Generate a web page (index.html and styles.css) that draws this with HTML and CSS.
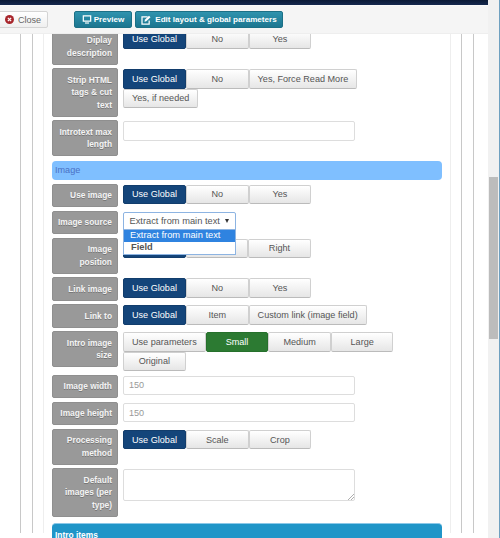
FILE: index.html
```html
<!DOCTYPE html>
<html lang="en">
<head>
  <meta charset="UTF-8">
  <title>Edit layout</title>
  <link rel="stylesheet" href="styles.css">
</head>
<body>

<div class="window">
  <div class="frame">
    <div class="topbar"></div>

    <div class="toolbar">
      <button class="tool-btn close-btn">
        <svg class="icon" viewBox="0 0 12 12" width="9" height="9">
          <circle cx="6" cy="6" r="6" fill="#a8262c"/>
          <path d="M3.8 3.8l4.4 4.4M8.2 3.8l-4.4 4.4" stroke="#fff" stroke-width="1.7"/>
        </svg>
        Close
      </button>
      <button class="tool-btn teal-btn preview-btn">
        <svg class="icon" viewBox="0 0 12 11" width="10" height="9">
          <path d="M1.5 1h9v6.5h-9z" fill="none" stroke="#fff" stroke-width="1.5"/>
          <path d="M3.5 9.8h5" stroke="#fff" stroke-width="1.4"/>
        </svg>
        Preview
      </button>
      <button class="tool-btn teal-btn edit-btn">
        <svg class="icon" viewBox="0 0 12 12" width="10" height="10">
          <path d="M8 2.2H1.2v8.6h8.6V6.5" fill="none" stroke="#fff" stroke-width="1.5"/>
          <path d="M4.2 8l.4-2.2L9.6.8l1.8 1.8-5 5z" fill="#fff"/>
        </svg>
        Edit layout &amp; global parameters
      </button>
    </div>

    <div class="main">
      <div class="box-outer">
        <div class="box-middle">
          <div class="box-inner">
            <div class="form">

              <div class="row">
                <div class="label">Diplay description</div>
                <div class="control">
                  <div class="btn-group">
                    <span class="opt active">Use Global</span>
                    <span class="opt">No</span>
                    <span class="opt">Yes</span>
                  </div>
                </div>
              </div>

              <div class="row">
                <div class="label">Strip HTML tags &amp; cut text</div>
                <div class="control">
                  <div class="btn-group">
                    <span class="opt active">Use Global</span>
                    <span class="opt">No</span>
                    <span class="opt">Yes, Force Read More</span>
                    <span class="opt">Yes, if needed</span>
                  </div>
                </div>
              </div>

              <div class="row">
                <div class="label">Introtext max length</div>
                <div class="control">
                  <div class="field"></div>
                </div>
              </div>

              <div class="section section-light">Image</div>

              <div class="row">
                <div class="label">Use image</div>
                <div class="control">
                  <div class="btn-group">
                    <span class="opt active">Use Global</span>
                    <span class="opt">No</span>
                    <span class="opt">Yes</span>
                  </div>
                </div>
              </div>

              <div class="row">
                <div class="label">Image source</div>
                <div class="control">
                  <div class="select">
                    <span>Extract from main text</span>
                    <span class="arrow"></span>
                    <ul class="select-menu">
                      <li class="selected">Extract from main text</li>
                      <li>Field</li>
                    </ul>
                  </div>
                </div>
              </div>

              <div class="row">
                <div class="label">Image position</div>
                <div class="control">
                  <div class="btn-group">
                    <!-- these two sit under the open select menu -->
                    <span class="opt active"></span>
                    <span class="opt"></span>
                    <span class="opt">Right</span>
                  </div>
                </div>
              </div>

              <div class="row">
                <div class="label">Link image</div>
                <div class="control">
                  <div class="btn-group">
                    <span class="opt active">Use Global</span>
                    <span class="opt">No</span>
                    <span class="opt">Yes</span>
                  </div>
                </div>
              </div>

              <div class="row">
                <div class="label">Link to</div>
                <div class="control">
                  <div class="btn-group">
                    <span class="opt active">Use Global</span>
                    <span class="opt">Item</span>
                    <span class="opt">Custom link (image field)</span>
                  </div>
                </div>
              </div>

              <div class="row">
                <div class="label">Intro image size</div>
                <div class="control">
                  <div class="btn-group">
                    <span class="opt">Use parameters</span>
                    <span class="opt green">Small</span>
                    <span class="opt">Medium</span>
                    <span class="opt">Large</span>
                    <span class="opt">Original</span>
                  </div>
                </div>
              </div>

              <div class="row">
                <div class="label">Image width</div>
                <div class="control">
                  <div class="field placeholder">150</div>
                </div>
              </div>

              <div class="row">
                <div class="label">Image height</div>
                <div class="control">
                  <div class="field placeholder">150</div>
                </div>
              </div>

              <div class="row">
                <div class="label">Processing method</div>
                <div class="control">
                  <div class="btn-group">
                    <span class="opt active">Use Global</span>
                    <span class="opt">Scale</span>
                    <span class="opt">Crop</span>
                  </div>
                </div>
              </div>

              <div class="row">
                <div class="label">Default images (per type)</div>
                <div class="control">
                  <div class="field textarea">
                    <svg class="grip" viewBox="0 0 6 6" width="6" height="6">
                      <path d="M0 6l6-6M3 6l3-3" stroke="#999" stroke-width="0.8"/>
                    </svg>
                  </div>
                </div>
              </div>

              <div class="section section-dark">Intro items</div>

            </div>
          </div>
        </div>
      </div>
    </div>
  </div>

  <div class="scrollbar">
    <div class="thumb"></div>
  </div>
</div>

</body>
</html>
```

FILE: styles.css
```css
* {
  box-sizing: border-box;
}

body {
  margin: 0;
  background: #fff;
  font-family: "Liberation Sans", Arial, sans-serif;
  font-size: 9.1px;
  color: #555;
  overflow: hidden;
}

.window {
  display: flex;
  width: 500px;
  height: 538px;
  overflow: hidden;
}

.frame {
  width: 488px;
  height: 538px;
  display: flex;
  flex-direction: column;
}

.topbar {
  height: 5px;
  flex: none;
  background: linear-gradient(#0b1a36, #16294f);
}

.toolbar {
  height: 29px;
  flex: none;
  display: flex;
  align-items: flex-start;
  padding-top: 5px;
  background: #f5f5f5;
  border-top: 1px solid #fafafa;
  border-bottom: 1px solid #eee;
  position: relative;
  z-index: 2;
}

.tool-btn {
  height: 17px;
  display: flex;
  align-items: center;
  justify-content: center;
  gap: 4px;
  padding: 0;
  border-radius: 2px;
  font-family: inherit;
  font-size: 9.1px;
  white-space: nowrap;
}

.close-btn {
  width: 50px;
  margin-left: -2px;
  margin-right: 26px;
  background: linear-gradient(#fff, #efefef);
  border: 1px solid #d4d4d4;
  color: #666;
}

.teal-btn {
  background: linear-gradient(#2f93ae, #1c7690);
  border: 1px solid #1c7086;
  color: #fff;
  font-size: 8.1px;
  font-weight: bold;
}

.preview-btn {
  width: 58px;
  margin-right: 3px;
  gap: 2px;
}

.edit-btn {
  width: 148px;
}

.main {
  flex: 1;
  min-height: 0;
  overflow: hidden;
  padding: 0 14px 0 20px;
}

.box-outer {
  height: 100%;
  border-left: 1px solid #c8c8c8;
  border-right: 1px solid #c8c8c8;
  padding: 0 11px;
}

.box-middle {
  height: 100%;
  border-left: 1px solid #c8c8c8;
  border-right: 1px solid #c8c8c8;
  padding: 0 10px;
}

.box-inner {
  height: 100%;
  border-left: 1px solid #eee;
  border-right: 1px solid #eee;
  padding: 0 8px;
}

.form {
  margin-top: -5.4px;
}

.row {
  display: flex;
  align-items: flex-start;
  margin-bottom: 3.5px;
}

.label {
  width: 66px;
  flex: none;
  padding: 4.6px 5px 4.6px 4px;
  background: #999;
  border-radius: 2px;
  border: 1px solid #8f8f8f;
  color: #f4f4f4;
  font-size: 8.4px;
  font-weight: bold;
  line-height: 12.4px;
  text-align: right;
  text-shadow: 0 1px 0 #777;
}

.control {
  flex: 1;
  padding: 1px 0 0 5px;
}

.btn-group {
  display: flex;
  flex-wrap: wrap;
  max-width: 275px;
}

.opt {
  min-width: 62.6px;
  height: 19.4px;
  padding: 0 8px;
  display: flex;
  align-items: center;
  justify-content: center;
  background: linear-gradient(#fff, #e6e6e6);
  border: 1px solid #d0d0d0;
  border-bottom-color: #bbb;
  border-radius: 2px;
  color: #555;
}

.opt.active {
  background: #14457a;
  border-color: #123d6c;
  color: #fff;
}

.opt.green {
  background: #2c7a32;
  border-color: #26702c;
  color: #fff;
}

.field {
  width: 232px;
  height: 19.6px;
  padding: 0 5px;
  display: flex;
  align-items: center;
  background: #fff;
  border: 1px solid #ddd;
  border-radius: 2px;
}

.placeholder {
  color: #999;
}

.textarea {
  height: 32px;
  position: relative;
}

.grip {
  position: absolute;
  right: 0;
  bottom: 0;
}

.section {
  height: 19px;
  margin: 5px 0 3.5px;
  padding: 4px 3px;
  border-radius: 4px;
  line-height: 11px;
}

.section-light {
  background: #7fbfff;
  color: #4a70c4;
}

.section-dark {
  height: 30px;
  margin-top: 6.3px;
  background: #2095c8;
  border-top: 1px solid #8cc8e8;
  color: #fff;
  font-size: 8.4px;
  font-weight: bold;
  line-height: 14px;
}

.select {
  width: 113px;
  height: 19.5px;
  padding: 0 5.5px;
  display: flex;
  align-items: center;
  justify-content: space-between;
  position: relative;
  background: #fff;
  border: 1px solid #8db4e2;
  border-radius: 2px;
  font-size: 9.3px;
}

.arrow {
  margin-right: 1px;
  border-left: 2.5px solid transparent;
  border-right: 2.5px solid transparent;
  border-top: 4px solid #333;
}

.select-menu {
  position: absolute;
  top: 16.5px;
  left: -1px;
  width: 113px;
  margin: 0;
  padding: 0 0 1px;
  list-style: none;
  background: #fff;
  border: 1px solid #8db4e2;
  z-index: 3;
}

.select-menu li {
  height: 11.6px;
  padding-left: 7px;
  line-height: 11.6px;
  color: #555;
  font-weight: bold;
}

.select-menu .selected {
  padding-left: 6px;
  background: #2f83e0;
  color: #fff;
  font-weight: normal;
}

.scrollbar {
  width: 12px;
  height: 538px;
  padding: 177px 1px 0 1px;
  background: #f1f1f1;
  border-right: 1px solid #6fa0c0;
}

.thumb {
  height: 162px;
  background: #bcbcbc;
}
```
